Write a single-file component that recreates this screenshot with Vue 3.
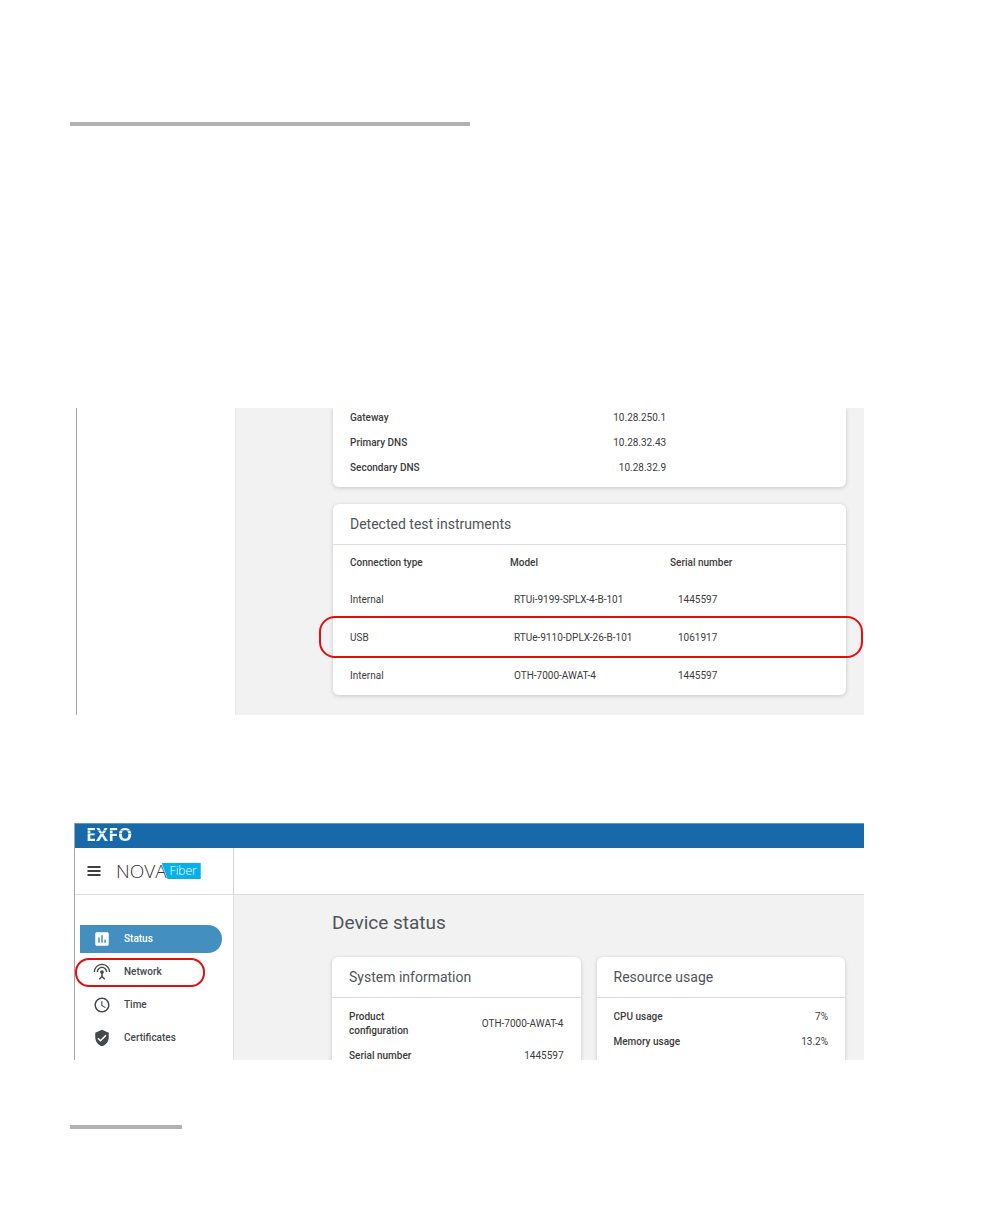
<template>
  <main class="page">
    <hr class="rule" />

    <section class="shot shot-instruments">
      <div class="blank-side"></div>
      <div class="shot-body">
        <div class="card card-top">
          <dl class="details narrow">
            <div v-for="row in network" :key="row.label" class="detail">
              <dt>{{ row.label }}</dt>
              <dd>{{ row.value }}</dd>
            </div>
          </dl>
        </div>

        <div class="card">
          <h2>Detected test instruments</h2>
          <table class="instruments">
            <thead>
              <tr>
                <th scope="col">Connection type</th>
                <th scope="col">Model</th>
                <th scope="col">Serial number</th>
              </tr>
            </thead>
            <tbody>
              <tr v-for="item in instruments" :key="item.model">
                <td>
                  {{ item.type }}
                  <span v-if="item.marked" class="marker row-marker"></span>
                </td>
                <td>{{ item.model }}</td>
                <td>{{ item.serial }}</td>
              </tr>
            </tbody>
          </table>
        </div>
      </div>
    </section>

    <section class="shot-device">
      <header class="brand-bar">
        <span class="exfo">EXFO</span>
      </header>
      <div class="title-bar">
        <div class="title-side">
          <button type="button" class="menu-button" aria-label="Menu">
            <svg viewBox="0 0 14 10" width="14" height="10">
              <path d="M0.5 1h13M0.5 5h13M0.5 9h13" stroke="#000" stroke-width="1.6" />
            </svg>
          </button>
          <div class="nova">
            <span class="nova-name">NOVA</span>
            <span class="nova-tag">Fiber</span>
          </div>
        </div>
      </div>
      <div class="shot">
        <nav class="side-nav">
          <a
            v-for="link in links"
            :key="link.label"
            href="#"
            class="nav-link"
            :class="{ active: link.active }"
          >
            <svg class="nav-icon" viewBox="0 0 24 24">
              <path :d="link.icon" />
            </svg>
            {{ link.label }}
            <span v-if="link.marked" class="marker nav-marker"></span>
          </a>
        </nav>
        <div class="shot-body status-body">
          <h1>Device status</h1>
          <div class="card-grid">
            <div v-for="card in cards" :key="card.title" class="card card-cut">
              <h2>{{ card.title }}</h2>
              <dl class="details">
                <div v-for="row in card.rows" :key="row.label" class="detail">
                  <dt>{{ row.label }}</dt>
                  <dd>{{ row.value }}</dd>
                </div>
              </dl>
            </div>
          </div>
        </div>
      </div>
    </section>

    <hr class="rule rule-short" />
  </main>
</template>

<script setup>
const network = [
  { label: "Gateway", value: "10.28.250.1" },
  { label: "Primary DNS", value: "10.28.32.43" },
  { label: "Secondary DNS", value: "10.28.32.9" },
];

const instruments = [
  { type: "Internal", model: "RTUi-9199-SPLX-4-B-101", serial: "1445597" },
  {
    type: "USB",
    model: "RTUe-9110-DPLX-26-B-101",
    serial: "1061917",
    marked: true,
  },
  { type: "Internal", model: "OTH-7000-AWAT-4", serial: "1445597" },
];

const links = [
  {
    label: "Status",
    active: true,
    icon: "M19 3H5c-1.1 0-2 .9-2 2v14c0 1.1.9 2 2 2h14c1.1 0 2-.9 2-2V5c0-1.1-.9-2-2-2zM9 17H7v-7h2v7zm4 0h-2V7h2v10zm4 0h-2v-4h2v4z",
  },
  {
    label: "Network",
    marked: true,
    icon: "M12 5c-3.87 0-7 3.13-7 7h1.8c0-2.87 2.33-5.2 5.2-5.2s5.2 2.33 5.2 5.2H19c0-3.87-3.13-7-7-7zm1 9.29c.88-.39 1.5-1.26 1.5-2.29 0-1.38-1.12-2.5-2.5-2.5S9.5 10.62 9.5 12c0 1.02.62 1.9 1.5 2.29v3.3L7.59 21 9 22.41l3-3 3 3L16.41 21 13 17.59v-3.3zM12 1C5.93 1 1 5.93 1 12h1.8c0-5.08 4.12-9.2 9.2-9.2s9.2 4.12 9.2 9.2H23c0-6.07-4.93-11-11-11z",
  },
  {
    label: "Time",
    icon: "M11.99 2C6.47 2 2 6.48 2 12s4.47 10 9.99 10C17.52 22 22 17.52 22 12S17.52 2 11.99 2zM12 20c-4.42 0-8-3.58-8-8s3.58-8 8-8 8 3.58 8 8-3.58 8-8 8zm.5-13H11v6l5.25 3.15.75-1.23-4.5-2.67z",
  },
  {
    label: "Certificates",
    icon: "M12 1L3 5v6c0 5.55 3.84 10.74 9 12 5.16-1.26 9-6.45 9-12V5l-9-4zm-2 16l-4-4 1.41-1.41L10 14.17l6.59-6.59L18 9l-8 8z",
  },
];

const cards = [
  {
    title: "System information",
    rows: [
      { label: "Product configuration", value: "OTH-7000-AWAT-4" },
      { label: "Serial number", value: "1445597" },
    ],
  },
  {
    title: "Resource usage",
    rows: [
      { label: "CPU usage", value: "7%" },
      { label: "Memory usage", value: "13.2%" },
    ],
  },
];
</script>

<style>
body {
  margin: 0;
  background: #fff;
}
</style>

<style scoped>
.page {
  padding: 122px 144px 95px 70px;
  font-family: Roboto, "Liberation Sans", sans-serif;
  font-size: 10px;
  line-height: 14px;
  color: #3c3c3c;
}

.rule {
  width: 400px;
  max-width: 100%;
  height: 4px;
  margin: 0;
  border: 0;
  background: #b2b2b2;
}

.rule-short {
  width: 112px;
  margin-top: 65px;
}

.shot {
  display: flex;
  overflow: hidden;
}

.shot-instruments {
  margin: 282px 0 0 6px;
  border-left: 1px solid #a6a6a6;
}

.blank-side {
  flex: none;
  width: 158px;
  border-right: 1px solid #e6e6e6;
}

.shot-body {
  flex: 1;
  min-width: 0;
  padding: 0 18px 20px 97px;
  background: #f2f2f2;
}

.card {
  background: #fff;
  border-radius: 6px;
  box-shadow: 0 1px 4px rgba(0, 0, 0, 0.18);
}

.card-top {
  margin-bottom: 17px;
  border-radius: 0 0 6px 6px;
}

.card h2 {
  margin: 0;
  padding: 10px 17px;
  border-bottom: 1px solid #dcdcdc;
  font-size: 14px;
  line-height: 20px;
  font-weight: 400;
  color: #505558;
}

.details {
  display: flex;
  flex-direction: column;
  gap: 11px;
  margin: 0;
  padding: 12px 17px 0;
}

.details.narrow {
  padding-top: 3px;
  padding-bottom: 12px;
}

.detail {
  display: flex;
  align-items: center;
  justify-content: space-between;
}

.narrow .detail {
  width: 66%;
}

dt {
  max-width: 90px;
  font-weight: 500;
}

dd {
  margin: 0;
}

.instruments {
  width: 100%;
  table-layout: fixed;
  border-collapse: collapse;
}

.instruments tr {
  position: relative;
}

.instruments th {
  height: 36px;
  padding: 0;
  font-weight: 500;
  text-align: left;
}

.instruments td {
  height: 38px;
  padding: 0;
}

.instruments td:nth-child(2) {
  padding-left: 4px;
}

.instruments td:nth-child(3) {
  padding-left: 8px;
}

.instruments th:first-child,
.instruments td:first-child {
  width: 160px;
  padding-left: 17px;
}

.instruments th:nth-child(2) {
  width: 160px;
}

.marker {
  position: absolute;
  box-sizing: border-box;
  border: 2px solid #e01010;
  pointer-events: none;
}

.row-marker {
  inset: -3px -17px -1px -14px;
  border-radius: 16px;
}

.shot-device {
  margin: 108px 0 0 4px;
  border-left: 1px solid #a6a6a6;
}

.brand-bar {
  display: flex;
  align-items: flex-start;
  height: 24px;
  padding-left: 11px;
  border-top: 1px solid #6c93b2;
  background: #1769aa;
}

.exfo {
  font-family: "Noto Sans", sans-serif;
  font-size: 18px;
  line-height: 20px;
  font-weight: 700;
  background: linear-gradient(
    #f2f8fc 0 6px,
    #8db8da 6px 7px,
    #f2f8fc 7px 9px,
    #8db8da 9px 10px,
    #f2f8fc 10px
  );
  background-clip: text;
  color: transparent;
}

.title-bar {
  display: flex;
  border-bottom: 1px solid #dcdcdc;
}

.title-side {
  display: flex;
  align-items: center;
  box-sizing: border-box;
  width: 159px;
  height: 46px;
  padding-left: 12px;
  border-right: 1px solid #d2d2d2;
}

.menu-button {
  display: flex;
  padding: 0;
  border: 0;
  background: none;
  cursor: pointer;
}

.nova {
  display: flex;
  align-items: center;
  margin-left: 15px;
}

.nova-name {
  z-index: 1;
  font-family: "Open Sans", sans-serif;
  font-size: 19px;
  line-height: 20px;
  font-weight: 300;
  color: #333;
}

/* the slanted edge follows the right leg of the A */
.nova-tag {
  margin-left: -5px;
  padding: 0 4px 0 8px;
  font-family: "Open Sans", sans-serif;
  font-size: 12px;
  line-height: 16px;
  font-weight: 300;
  color: #fff;
  background: #08b0ea;
  clip-path: polygon(0 0, 100% 0, 100% 100%, 6px 100%);
}

.side-nav {
  flex: none;
  display: flex;
  flex-direction: column;
  gap: 5px;
  box-sizing: border-box;
  width: 159px;
  padding: 30px 11px 8px 5px;
  border-right: 1px solid #e0e0e0;
}

.nav-link {
  position: relative;
  display: flex;
  align-items: center;
  gap: 13px;
  height: 28px;
  padding-left: 13px;
  border-radius: 0 14px 14px 0;
  font-weight: 500;
  color: #43484c;
  text-decoration: none;
}

.nav-link.active {
  background: #438fc0;
  color: #fff;
}

.nav-icon {
  width: 18px;
  height: 18px;
  fill: currentColor;
}

.nav-marker {
  inset: 0 17px -1px -5px;
  border-radius: 14px;
}

.status-body {
  padding: 16px 19px 0 98px;
}

.status-body h1 {
  margin: 0 0 22px;
  font-size: 19px;
  line-height: 24px;
  font-weight: 400;
  color: #505558;
}

.card-grid {
  display: grid;
  grid-template-columns: 1fr 1fr;
  gap: 16px;
}

.card-cut {
  margin-bottom: -3px;
  border-radius: 6px 6px 0 0;
}
</style>
